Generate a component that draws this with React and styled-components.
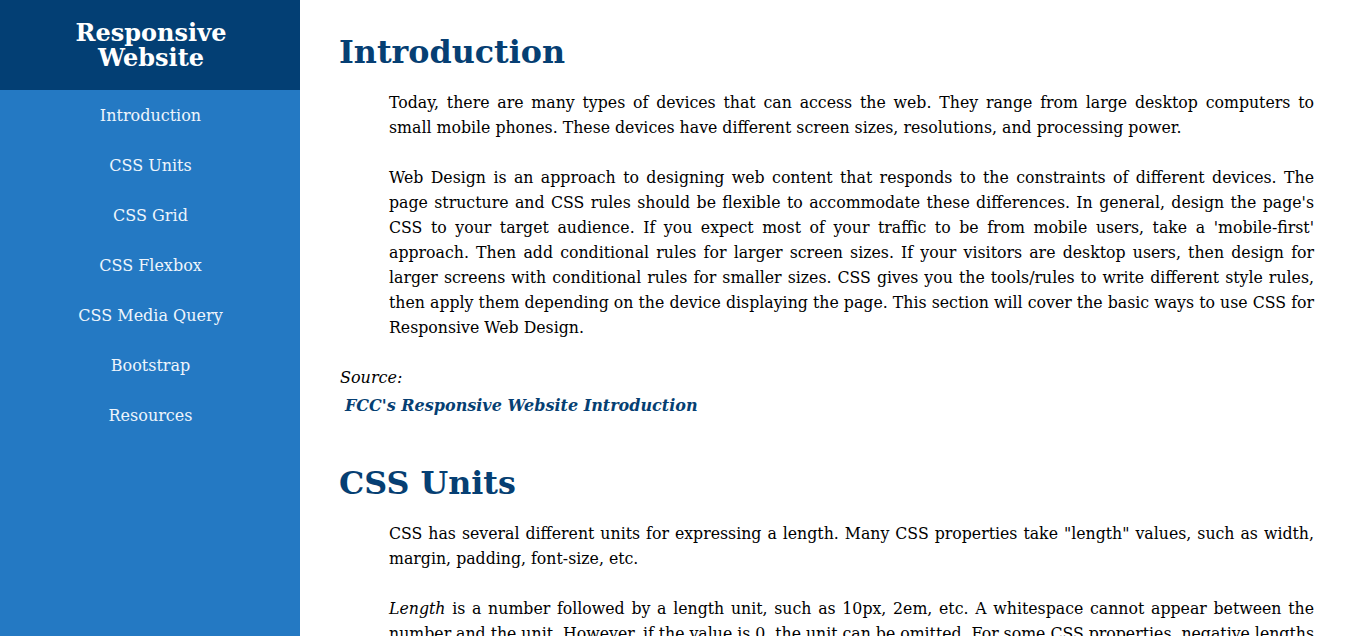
import styled, { createGlobalStyle } from 'styled-components';

const sections = [
    {
        id: 'introduction',
        title: 'Introduction',
        paragraphs: [
            { text: 'Today, there are many types of devices that can access the web. They range from large desktop computers to small\u00a0mobile phones. These devices have different screen sizes, resolutions, and processing power.' },
            { text: "Web Design is an approach to designing web content that responds to the constraints of different devices. The page structure and CSS rules should be flexible to accommodate these differences. In general, design the page's CSS to your target audience. If you expect most of your traffic to be from mobile users, take a 'mobile-first' approach. Then add conditional rules for larger screen sizes. If your visitors are desktop users, then design for larger screens with conditional rules for smaller sizes. CSS gives you the tools/rules to write different style rules, then apply them depending on the device displaying the page. This section will cover the basic ways to use CSS for Responsive Web Design." },
        ],
        source: "FCC's Responsive Website Introduction",
    },
    {
        id: 'css-units',
        title: 'CSS Units',
        paragraphs: [
            { text: 'CSS has several different units for expressing a length. Many CSS properties take "length" values, such as width, margin, padding, font-size, etc.' },
            {
                tight: true,
                text: (
                    <>
                        <em>Length</em> is a number followed by a length unit, such as 10px, 2em, etc. A whitespace cannot appear between the number and the unit. However, if the value is 0, the unit can be omitted. For some CSS properties, negative lengths are allowed.
                    </>
                ),
            },
        ],
        source: "W3Schools' CSS Units",
    },
];

const navItems = [
    'Introduction',
    'CSS Units',
    'CSS Grid',
    'CSS Flexbox',
    'CSS Media Query',
    'Bootstrap',
    'Resources',
];

const App = () => {
    return (
        <>
            <GlobalStyle />
            <Page>
                <Sidebar>
                    <Brand>Responsive Website</Brand>
                    <Nav>
                        {navItems.map((item) => (
                            <NavLink key={item} href="#">
                                {item}
                            </NavLink>
                        ))}
                    </Nav>
                </Sidebar>
                <Main>
                    {sections.map((section) => (
                        <Section key={section.id} id={section.id}>
                            <Heading>{section.title}</Heading>
                            {section.paragraphs.map((p, i) => (
                                <Text key={i} $tight={p.tight}>
                                    {p.text}
                                </Text>
                            ))}
                            <SourceLabel>Source:</SourceLabel>
                            <SourceLink href="#">{section.source}</SourceLink>
                        </Section>
                    ))}
                </Main>
            </Page>
        </>
    );
};

const GlobalStyle = createGlobalStyle`
    html, body {
        margin: 0;
        height: 100%;
        overflow: hidden;
    }

    body {
        font-family: "DejaVu Serif", serif;
        color: #000;
        background: #fff;
    }
`;

const Page = styled.div`
    display: flex;
    height: 100vh;
`;

const Sidebar = styled.nav`
    width: 300px;
    flex-shrink: 0;

    display: flex;
    flex-direction: column;

    background: #2479c3;
`;

const Brand = styled.header`
    height: 90px;

    display: flex;
    align-items: center;
    justify-content: center;

    padding: 0 60px 0 62px;

    background: #033f74;
    color: #fff;

    font-size: 24px;
    font-weight: bold;
    line-height: 25px;
    text-align: center;
`;

const Nav = styled.div`
    display: flex;
    flex-direction: column;
`;

const NavLink = styled.a`
    height: 50px;

    display: flex;
    align-items: center;
    justify-content: center;
    padding-left: 1px;

    color: #eef5fc;
    font-size: 16px;
    text-decoration: none;
`;

const Main = styled.main`
    flex: 1;
    padding: 34px 40px 0 39px;
    overflow: hidden;
`;

const Section = styled.section`
    padding-bottom: 47px;
`;

const Heading = styled.h1`
    margin: 0 0 20px;

    color: #063f73;
    font-size: 31.75px;
    line-height: 36px;
`;

const Text = styled.p`
    margin: 0 0 25px 50px;

    font-size: 15.75px;
    line-height: 25px;
    word-spacing: ${(p) => (p.$tight ? '-0.3px' : '0')};
    text-align: justify;
`;

const SourceLabel = styled.p`
    margin: 1px 0 0 1px;

    font-size: 16px;
    font-style: italic;
    line-height: 25px;
`;

const SourceLink = styled.a`
    display: block;
    margin-top: 3px;
    padding-left: 6px;

    color: #063f73;
    font-size: 16px;
    font-style: italic;
    font-weight: bold;
    line-height: 25px;
    text-decoration: none;
`;

export default App;
